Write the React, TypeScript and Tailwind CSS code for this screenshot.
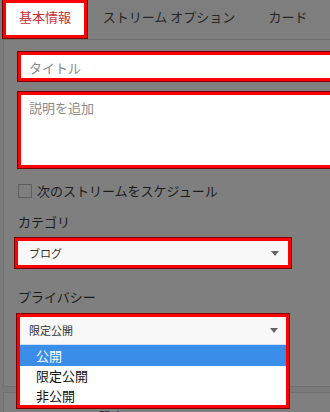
import React from "react";

const redBox = "border-[3px] border-[#ff0000] ring-1 ring-[#7a0000]";

const Caret = () => (
  <svg width="8" height="5" viewBox="0 0 8 5" className="shrink-0">
    <path d="M0 0 L8 0 L4 5 Z" fill="#666666" />
  </svg>
);

const App = () => {
  const options = [
    { label: "公開", active: true, h: "h-[21px]" },
    { label: "限定公開", active: false, h: "h-[20px]" },
    { label: "非公開", active: false, h: "h-[19px]" },
  ];

  return (
    <div
      className="w-[330px] h-[412px] overflow-hidden bg-[#7a7a7a] flex flex-col"
      style={{ fontFamily: '"Noto Sans CJK JP", "Noto Sans", sans-serif' }}
    >
      {/* Tabs */}
      <div className="h-[40px] shrink-0 flex border-b border-[#6f6f6f] bg-[#7e7e7e]">
        <div className={`ml-[3px] w-[84px] h-[38px] bg-white flex items-center justify-center pb-[4px] text-[13px] text-[#c62f35] ${redBox}`}>
          基本情報
        </div>
        <div className="w-[164px] flex items-center justify-center pb-[6px] text-[13px] text-[#262626]">
          ストリーム オプション
        </div>
        <div className="w-[74px] flex items-center justify-center pb-[6px] text-[13px] text-[#262626]">
          カード
        </div>
      </div>

      {/* Basic info panel */}
      <div className="ml-[3px] h-[347px] shrink-0 border-l border-b border-[#707070] bg-[#7f7f7f] pl-[14px] flex flex-col">
        <div className={`mt-[12px] w-[320px] h-[29px] shrink-0 bg-white flex items-center pl-[8px] pt-[2px] text-[13px] text-[#8a8a8a] ${redBox}`}>
          タイトル
        </div>
        <div className={`mt-[11px] w-[320px] h-[76px] shrink-0 bg-white pl-[8px] pt-[5px] leading-[16px] text-[13px] text-[#8a8a8a] ${redBox}`}>
          説明を追加
        </div>

        <div className="mt-[16px] flex items-center">
          <div className="w-[14px] h-[14px] border border-[#5f5f5f]" />
          <span className="ml-[5px] text-[13px] leading-[14px] text-[#1c1c1c]">
            次のストリームをスケジュール
          </span>
        </div>

        <div className="mt-[16px] text-[13px] leading-[16px] text-[#1c1c1c]">カテゴリ</div>
        <div className={`mt-[8px] -ml-[3px] w-[276px] h-[30px] shrink-0 bg-[#f8f8f8] flex items-center justify-between pl-[11px] pr-[9px] ${redBox}`}>
          <span className="text-[11px] text-[#333333]">ブログ</span>
          <Caret />
        </div>

        <div className="mt-[21px] text-[13px] leading-[16px] text-[#1c1c1c]">プライバシー</div>
        <div className="mt-[9px] -ml-[1px] w-[272px] h-[30px] shrink-0 relative">
          <div className={`absolute left-0 top-0 w-[272px] bg-white z-10 ${redBox}`}>
            <div className="h-[27px] bg-[#f8f8f8] flex items-center justify-between pl-[9px] pr-[8px]">
              <span className="text-[11px] text-[#333333]">限定公開</span>
              <Caret />
            </div>
            <div className="h-px bg-[#cfe0f5]" />
            {options.map((o) => (
              <div
                key={o.label}
                className={`${o.h} flex items-center pl-[16px] text-[13px] ${
                  o.active ? "bg-[#3b8dea] text-white" : "text-[#111111]"
                }`}
              >
                {o.label}
              </div>
            ))}
          </div>
        </div>
      </div>

      {/* Next panel, mostly hidden */}
      <div className="mt-[5px] ml-[3px] h-[40px] shrink-0 border-l border-t border-[#707070] bg-[#7f7f7f] pl-[30px] pt-[14px] text-[13px] text-[#1c1c1c]">
        ストリーム設定
      </div>
    </div>
  );
};

export default App;
